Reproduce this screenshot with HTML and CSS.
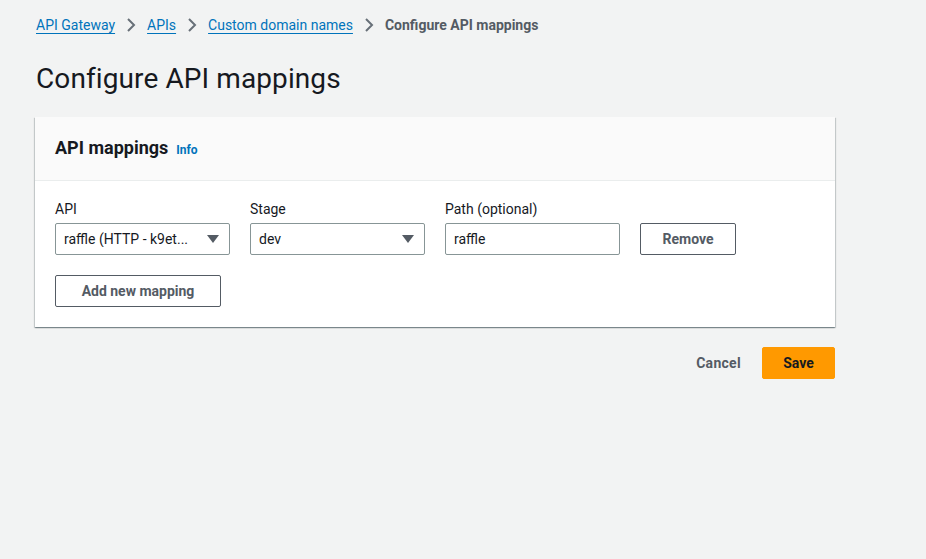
FILE: index.html
```html
<!DOCTYPE html>
<html>
<head>
<meta charset="utf-8">
<link rel="stylesheet" href="styles.css">
</head>
<body>
<div class="page">
  <nav class="crumbs">
    <a class="crumb-link" href="#">API Gateway</a>
    <svg class="chev" viewBox="0 0 16 16"><path d="M5 2l6 6-6 6" fill="none" stroke="#687078" stroke-width="2"/></svg>
    <a class="crumb-link" href="#">APIs</a>
    <svg class="chev" viewBox="0 0 16 16"><path d="M5 2l6 6-6 6" fill="none" stroke="#687078" stroke-width="2"/></svg>
    <a class="crumb-link" href="#">Custom domain names</a>
    <svg class="chev" viewBox="0 0 16 16"><path d="M5 2l6 6-6 6" fill="none" stroke="#687078" stroke-width="2"/></svg>
    <span class="crumb-current">Configure API mappings</span>
  </nav>
  <h1 class="title">Configure API mappings</h1>
  <section class="panel">
    <div class="panel-head">
      <h2 class="panel-title">API mappings</h2>
      <a class="info" href="#">Info</a>
    </div>
    <div class="panel-body">
      <div class="row">
        <div class="field">
          <label class="label">API</label>
          <div class="select"><span class="select-text">raffle (HTTP - k9et...</span><span class="caret"></span></div>
        </div>
        <div class="field">
          <label class="label">Stage</label>
          <div class="select"><span class="select-text">dev</span><span class="caret"></span></div>
        </div>
        <div class="field">
          <label class="label">Path (optional)</label>
          <div class="input">raffle</div>
        </div>
        <div class="field field-btn">
          <button class="btn btn-remove">Remove</button>
        </div>
      </div>
      <button class="btn btn-add">Add new mapping</button>
    </div>
  </section>
  <div class="actions">
    <button class="btn-link">Cancel</button>
    <button class="btn-primary">Save</button>
  </div>
</div>
</body>
</html>
```
FILE: styles.css
```css
* { box-sizing: border-box; }
html, body { margin: 0; padding: 0; }
body {
  background: #f2f3f3;
  font-family: Roboto, "Open Sans", sans-serif;
  color: #16191f;
  font-size: 14px;
  height: 559px;
}
.page {
  padding: 14px 0 0 35px;
  width: 836px;
}
.crumbs {
  display: flex;
  align-items: center;
  height: 22px;
  padding-left: 1px;
  font-size: 14px;
}
.crumb-link {
  color: #0073bb;
  text-decoration: underline;
  text-underline-offset: 3px;
}
.chev {
  width: 16px;
  height: 16px;
  margin: 0 8px 0 8px;
}
.crumb-current {
  color: #545b64;
  font-weight: 700;
}
.title {
  margin: 25px 0 0 1px;
  font-size: 28px;
  font-weight: 400;
  line-height: 36px;
  color: #16191f;
  letter-spacing: 0.1px;
}
.panel {
  margin-top: 20px;
  background: #fff;
  box-shadow: 0 1px 1px 0 rgba(0,28,36,.3), 1px 1px 1px 0 rgba(0,28,36,.15), -1px 1px 1px 0 rgba(0,28,36,.15);
  width: 800px;
}
.panel-head {
  display: flex;
  align-items: baseline;
  height: 64px;
  padding: 19px 20px 0 20px;
  background: #fafafa;
  border-bottom: 1px solid #eaeded;
}
.panel-title {
  margin: 0;
  font-size: 18px;
  font-weight: 700;
  line-height: 24px;
}
.info {
  margin-left: 8px;
  font-size: 12px;
  font-weight: 700;
  color: #0073bb;
  text-decoration: none;
}
.panel-body {
  padding: 19px 20px 20px 20px;
}
.row {
  display: flex;
  gap: 20px;
}
.field {
  display: flex;
  flex-direction: column;
  width: 175px;
}
.field-btn {
  justify-content: flex-end;
  width: auto;
}
.label {
  font-size: 14px;
  line-height: 18px;
  margin-bottom: 5px;
  color: #16191f;
}
.select, .input {
  display: flex;
  align-items: center;
  height: 32px;
  border: 1px solid #879596;
  border-radius: 2px;
  padding: 0 8px;
  font-size: 14px;
  background: #fff;
}
.select-text { flex: 1; white-space: nowrap; overflow: hidden; }
.caret {
  width: 0;
  height: 0;
  border-left: 6px solid transparent;
  border-right: 6px solid transparent;
  border-top: 8px solid #545b64;
  margin-right: 2px;
}
.btn {
  font-family: inherit;
  height: 32px;
  background: #fff;
  border: 1px solid #545b64;
  border-radius: 2px;
  color: #545b64;
  font-size: 14px;
  font-weight: 700;
  padding: 0 20px;
}
.btn-remove { width: 96px; }
.btn-add {
  margin-top: 20px;
  width: 166px;
}
.actions {
  display: flex;
  justify-content: flex-end;
  align-items: center;
  margin-top: 20px;
  width: 800px;
}
.btn-link {
  font-family: inherit;
  background: none;
  border: none;
  color: #545b64;
  font-weight: 700;
  font-size: 14px;
  padding: 0 21px 0 20px;
  height: 32px;
  letter-spacing: 0.3px;
}
.btn-primary {
  font-family: inherit;
  background: #ff9900;
  border: 1px solid #ff9900;
  border-radius: 2px;
  color: #16191f;
  font-weight: 700;
  font-size: 14px;
  height: 32px;
  width: 73px;
}
```
